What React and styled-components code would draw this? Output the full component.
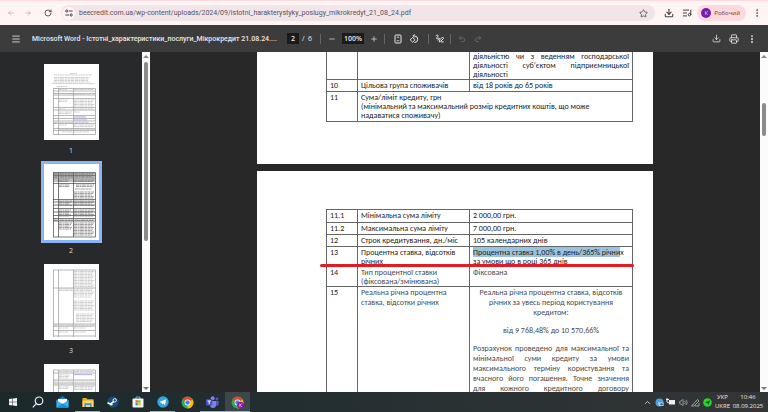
import React from "react";
import styled, { createGlobalStyle } from "styled-components";
import {
  ArrowLeft, ArrowRight, RotateCw, Star, Download, ListMusic, EllipsisVertical,
  Menu, Minus, Plus, Undo2, Redo2, Printer, ChevronUp, Volume2,
} from "lucide-react";

const Global = createGlobalStyle`
  * { box-sizing: border-box; }
  body { margin: 0; font-family: "Open Sans", "Noto Sans", sans-serif; background: #282828; }
  button, input { font: inherit; color: inherit; border: 0; padding: 0; margin: 0; background: none; }
`;

const Window = styled.div`
  display: flex;
  flex-direction: column;
  height: 100vh;
  overflow: hidden;
`;

/* ---------- browser bar ---------- */
const BrowserBar = styled.header`
  flex: none;
  display: flex;
  align-items: center;
  height: 25px;
  padding: 0 2px 0 5px;
  background: #fff5f5;
  border-top: 1px solid #ffd9e0;
  color: #4a4044;
`;

const IconButton = styled.button`
  flex: none;
  display: flex;
  align-items: center;
  justify-content: center;
  width: ${(p) => p.$w || 18}px;
  height: 16px;
  color: ${(p) => p.$color || "inherit"};
`;

const AddressBox = styled.div`
  flex: 1;
  display: flex;
  align-items: center;
  height: 16px;
  margin: 0 5px 0 4px;
  padding: 0 3px 0 0;
  border-radius: 8px;
  background: #f2e5ea;
`;

const SiteInfo = styled.button`
  display: flex;
  align-items: center;
  justify-content: center;
  width: 13px;
  height: 13px;
  margin: 0 4px 0 1px;
  border-radius: 50%;
  background: #fff5f5;
`;

const Address = styled.input`
  flex: 1;
  min-width: 0;
  font-family: Roboto, sans-serif;
  font-size: 7px;
  line-height: 12px;
  color: #5b5156;
  outline: none;
`;

const Profile = styled.button`
  display: flex;
  align-items: center;
  gap: 3px;
  height: 16px;
  margin: 0 2px 0 1px;
  padding: 0 6px 0 4px;
  border-radius: 8px;
  background: #ffd9e0;
  color: #5c3a44;
  font-size: 6px;
`;

const Avatar = styled.span`
  width: 10px;
  height: 10px;
  border-radius: 50%;
  background: #7320a8;
  color: #e8d5f2;
  font-size: 6px;
  line-height: 10px;
  text-align: center;
`;

/* ---------- PDF toolbar ---------- */
const PdfBar = styled.div`
  flex: none;
  display: flex;
  align-items: center;
  height: 27px;
  padding: 0 7px;
  background: #3c3c3c;
  color: #e8e8e8;
  font-size: 8px;
`;

const DocTitle = styled.h1`
  min-width: 241px;
  margin: 0 10px 0 7px;
  font-family: Roboto, sans-serif;
  font-size: 7px;
  line-height: 12px;
  font-weight: 500;
  white-space: nowrap;
`;

const PageBox = styled.input`
  width: ${(p) => p.$w}px;
  height: 11px;
  background: #1b1b1b;
  text-align: center;
  font-size: 7px;
  font-weight: 600;
`;

const PageTotal = styled.span`
  margin-left: 3px;
  font-size: 7px;
`;

const Divider = styled.span`
  width: 1px;
  height: 10px;
  margin: 0 ${(p) => p.$right}px 0 ${(p) => p.$left}px;
  background: #666;
`;

const Spacer = styled.span`
  flex: 1;
`;

/* ---------- body ---------- */
const Body = styled.div`
  flex: 1;
  min-height: 0;
  display: flex;
`;

const Sidebar = styled.nav`
  flex: none;
  display: flex;
  flex-direction: column;
  align-items: center;
  width: 142px;
  padding-top: 9px;
  overflow: hidden;
  background: #28292a;
`;

const ThumbLink = styled.a`
  flex: none;
  display: flex;
  flex-direction: column;
  align-items: center;
  height: 100px;
  color: #dcdcdc;
  font-size: 7px;
  line-height: 9px;
  text-decoration: none;
`;

const ThumbFrame = styled.span`
  display: block;
  height: 82px;
  margin-bottom: 3px;
  border: 3px solid ${(p) => (p.$active ? "#8ab4f8" : "transparent")};

  svg { display: block; }
`;

const ScrollTrack = styled.div`
  flex: none;
  display: flex;
  flex-direction: column;
  align-items: center;
  width: 8px;
  padding: 3px 0 2px;
  background: #fbfbfb;
`;

const Arrow = styled.span`
  flex: none;
  border: 3px solid transparent;
  border-top-width: ${(p) => (p.$down ? 3 : 0)}px;
  border-bottom-width: ${(p) => (p.$down ? 0 : 3)}px;
  border-top-color: ${(p) => (p.$down ? "#777" : "transparent")};
  border-bottom-color: ${(p) => (p.$down ? "transparent" : "#888")};
`;

const Thumb = styled.span`
  flex: none;
  width: 4px;
  height: ${(p) => p.$h}px;
  margin: ${(p) => p.$gap}px 0 auto;
  border-radius: 2px;
  background: #8b8b8b;
`;

const Viewer = styled.main`
  flex: 1;
  min-width: 0;
  display: flex;
  flex-direction: column;
  align-items: center;
  overflow: hidden;
  background: #282828;
`;

const Sheet = styled.section`
  flex: none;
  width: 396px;
  max-width: 100%;
  padding: ${(p) => p.$top}px 20px ${(p) => p.$bottom}px 69px;
  margin-top: ${(p) => (p.$scrolled ? -2 : 0)}px;
  margin-bottom: 7px;
  background: #fff;
`;

const Grid = styled.table`
  width: 100%;
  border-collapse: collapse;
  table-layout: fixed;
  font-family: Carlito, Lato, "Open Sans", sans-serif;
  font-size: 8px;
  line-height: 10px;
  color: #222;
`;

const Row = styled.tr`
  height: ${(p) => p.$h || 12}px;
  line-height: ${(p) => (p.$tight ? 9 : 10)}px;

  > td { padding: ${(p) => (p.$tight ? "1px 3px 0" : "0 3px")}; }
`;

const Cell = styled.td`
  border: 1px solid #666;
  vertical-align: top;
  color: ${(p) => (p.$soft ? "#4a4a4a" : "inherit")};
`;

const Para = styled.p`
  margin: 0 0 ${(p) => p.$after || 0}px;
  text-align: ${(p) => p.$align || "left"};
  text-align-last: ${(p) => (p.$stretch ? "justify" : "auto")};
  white-space: ${(p) => (p.$stretch ? "nowrap" : "normal")};
`;

const Marked = styled.mark`
  background: #9cc3dd;
  color: inherit;
`;

const RateCell = styled(Cell)`
  position: relative;
`;

const RedLine = styled.span`
  position: absolute;
  left: -7px;
  bottom: -1px;
  z-index: 1;
  width: 314px;
  height: 3px;
  border-radius: 2px;
  background: #e31b23;
`;

/* ---------- taskbar ---------- */
const Taskbar = styled.footer`
  flex: none;
  display: flex;
  align-items: stretch;
  height: 20px;
  background: linear-gradient(90deg, #1b292b, #263032 50%, #343536);
  color: #e6e6e6;
`;

const Task = styled.button`
  display: flex;
  align-items: center;
  justify-content: center;
  width: 25px;
  background: ${(p) => (p.$active ? "#3d4649" : "none")};
  box-shadow: inset 0 ${(p) => (p.$open ? -1 : 0)}px 0 #86b3cf;
`;

const Tray = styled.div`
  display: flex;
  align-items: center;
  margin-left: auto;
  padding-right: 4px;
`;

const TrayButton = styled.button`
  display: flex;
  align-items: center;
  justify-content: center;
  width: 12px;
`;

const TrayText = styled.div`
  width: ${(p) => p.$w}px;
  font-size: 6px;
  line-height: 9px;
  text-align: center;
`;

/* ---------- drawings ---------- */
const Tune = () => (
  <svg width="8" height="8" viewBox="0 0 8 8" fill="none" stroke="#4a4044">
    <circle cx="1.8" cy="2" r="1.1" /><path d="M4 2h3.6M.4 6H4" /><circle cx="6.2" cy="6" r="1.1" />
  </svg>
);
const FitPage = () => (
  <svg width="8" height="10" viewBox="0 0 8 10" fill="none" stroke="currentColor">
    <rect x="1" y="1" width="6" height="8" rx=".8" /><path d="M2.8 4L4 2.7 5.2 4M2.8 6L4 7.3 5.2 6" strokeWidth=".8" />
  </svg>
);
const Rotate = () => (
  <svg width="10" height="10" viewBox="0 0 10 10" fill="none" stroke="currentColor">
    <path d="M4.4 1.9h1a3.3 3.3 0 1 1 0 6.6M5.6.3L4 1.9l1.6 1.6M3.6 3.4L6 5.8 3.6 8.2 1.2 5.8z" />
  </svg>
);
const Annotate = () => (
  <svg width="9" height="9" viewBox="0 0 9 9" fill="none" stroke="currentColor">
    <path d="M.8 2.2C2 .4 3.4.8 3 2.1S1 3.9 1.6 4.5 4 3.5 4.4 4.3 3 5.6 2.4 6.2M4.2 7.9l.3-1.9 3-3 1.2 1.3-3 3zM6 7.9h2.6" />
  </svg>
);

function PageThumb({ rows, text, links = [], dark, cut = 73 }) {
  const line = dark ? "#444" : "#999";
  const top = rows[0];
  return (
    <svg width="55" height="76" viewBox="0 0 55 76">
      <rect width="55" height="76" fill="#fff" />
      <g stroke={line} strokeWidth=".7">
        {rows.map((y) => <path key={y} d={`M9 ${y}H51.5`} />)}
        <path d={`M9.5 ${top}V${cut}M14.5 ${top}V${cut}M29.5 ${top}V${cut}M51.5 ${top}V${cut}`} />
      </g>
      <g stroke={dark ? "#777" : "#bbb"} strokeWidth=".7" strokeDasharray="3 .5 2 .4 4 .6">
        {text.flatMap(([x, y, w, n]) =>
          Array.from({ length: n }, (_, i) => (
            <path key={`${x}-${y}-${i}`} d={`M${x} ${y + i * 1.5}h${w - (i % 3)}`} />
          ))
        )}
      </g>
      {links.map(([x, y, w]) => <path key={y} d={`M${x} ${y}h${w}`} stroke="#b4b4f2" strokeWidth="1.2" />)}
    </svg>
  );
}

const thumbs = [
  { label: "1", rows: [24.5, 27, 29.5, 31, 34.5, 43.5, 46, 51.5, 54.5, 57, 59.5, 64.5, 66.5, 70.5], cut: 70.5,
    text: [[26, 9.5, 7, 1], [10, 11, 38, 1], [10, 13.5, 36, 4], [8, 19.5, 43, 1], [13, 22.5, 10, 1], [15, 25.5, 8, 1], [30, 25.5, 19, 1], [24, 30, 17, 1], [15, 36, 9, 2], [30, 36, 20, 5], [15, 45, 6, 1], [30, 45, 19, 1], [15, 48, 13, 2], [30, 48, 6, 1], [10, 58.5, 35, 1], [15, 61, 8, 1], [30, 61, 20, 2], [15, 65.5, 36, 1], [18, 68, 27, 1]],
    links: [[30, 53, 12], [30, 56, 13]] },
  { label: "2", dark: true, rows: [8.5, 10, 11.5, 13, 15, 17, 19.5, 35.5, 38, 41, 44.5, 48, 51.5, 54.5, 57, 73],
    text: [[10, 9.3, 40, 4], [15, 16, 10, 2], [30, 16, 20, 2], [15, 21, 11, 2], [32, 21, 18, 2], [31, 25, 17, 1], [30, 28, 20, 5], [15, 37, 13, 4], [30, 37, 20, 4], [15, 46, 12, 5], [30, 46, 20, 5], [10, 55, 40, 2], [15, 59, 13, 5], [30, 59, 20, 9]] },
  { label: "3", rows: [6, 24, 60, 62, 66.5, 72],
    text: [[30, 7.5, 20, 11], [15, 25, 34, 2], [30, 28, 20, 3], [30, 33, 17, 1], [30, 37, 20, 7], [32, 50, 18, 6], [10, 61, 40, 2], [15, 64, 9, 1], [30, 64, 12, 1], [15, 68, 9, 1], [30, 68, 12, 1]] },
  { rows: [6, 9, 16, 19, 21], text: [[15, 7.5, 35, 1], [15, 11, 11, 3], [10, 17, 40, 1], [10, 20, 40, 1], [15, 23, 10, 2], [30, 22.5, 20, 3]], links: [[30, 10.5, 18]] },
];

const ChromeLogo = ({ badge }) => (
  <svg width="13" height="13" viewBox="0 0 24 24">
    <circle cx="12" cy="12" r="11" fill="#33a852" />
    <path d="M12 12L2.5 6.5A11 11 0 0 1 21.5 6.5z" fill="#ea4335" />
    <path d="M12 12l9.5-5.5A11 11 0 0 1 12 23z" fill="#fbbc04" />
    <circle cx="12" cy="12" r="5.4" fill="#fff" /><circle cx="12" cy="12" r="4.2" fill="#4285f4" />
    {badge && <circle cx="17.5" cy="17" r="6.3" fill="#8a1aa8" />}
    {badge && <path d="M16 14v6M20 14l-3.5 3 3.5 3" stroke="#fff" fill="none" />}
  </svg>
);

const tasks = [
  { name: "Start", icon: <svg width="8" height="8" viewBox="0 0 8 8" fill="#f4f4f4"><path d="M0 1l3.5-.5v3.2H0zM4 .4L8 0v3.7H4zM0 4.2h3.5v3.3L0 7zM4 4.2h4V8l-4-.5z" /></svg> },
  { name: "Search", icon: <svg width="12" height="12" viewBox="0 0 12 12" fill="none" stroke="#eee" strokeWidth="1.2"><circle cx="7" cy="4.8" r="3.8" /><path d="M4.3 7.6L.8 11.3" /></svg> },
  { name: "Mail", icon: <svg width="13" height="12" viewBox="0 0 13 12"><path d="M.5 4L6.5 0l6 4v7.5H.5z" fill="#1173c4" /><path d="M2 3h9v5H2z" fill="#fff" /><path d="M.5 4l6 4 6-4v7.5H.5z" fill="#35b4ef" /><path d="M.5 11.5l6-4 6 4z" fill="#1b8fdc" /></svg> },
  { name: "Files", open: true, icon: <svg width="12" height="11" viewBox="0 0 12 11"><path d="M.5 1h4l1 1.2h6V10H.5z" fill="#e8a92c" /><path d="M.5 3.5h11V10H.5z" fill="#fcd567" /><path d="M2.5 10V6.3h7V10H8V8H4v2z" fill="#3c8ed0" /></svg> },
  { name: "Steam", icon: <svg width="12" height="12" viewBox="0 0 12 12"><circle cx="6" cy="6" r="5.7" fill="#174a7c" /><path d="M.5 6.8l3 1.3L7 5.2" stroke="#fff" strokeWidth="1.7" fill="none" /><circle cx="7.7" cy="4.3" r="1.7" fill="#174a7c" stroke="#fff" strokeWidth=".9" /><circle cx="4.3" cy="8.3" r="1.3" fill="#fff" /></svg> },
  { name: "Store", icon: <svg width="12" height="12" viewBox="0 0 12 12"><path d="M4 3V1h4v2" fill="none" stroke="#57b7e8" /><rect x=".5" y="2.5" width="11" height="9" rx="1" fill="#f5f5f5" /><path d="M3.5 4.3h2.3v2.3H3.5z" fill="#f25022" /><path d="M6.2 4.3h2.3v2.3H6.2z" fill="#7fba00" /><path d="M3.5 7h2.3v2.3H3.5z" fill="#00a4ef" /><path d="M6.2 7h2.3v2.3H6.2z" fill="#ffb900" /></svg> },
  { name: "Telegram", open: true, icon: <svg width="12" height="12" viewBox="0 0 12 12"><circle cx="6" cy="6" r="5.7" fill="#34a5df" /><path d="M2.3 5.9L9.2 3.2 8 9 6.1 7.6 5 8.6 4.7 6.9z" fill="#fff" /></svg> },
  { name: "Chrome", icon: <ChromeLogo /> },
  { name: "Teams", open: true, icon: <svg width="13" height="12" viewBox="0 0 13 12"><circle cx="6.7" cy="2.3" r="2" fill="#7b83eb" /><circle cx="11" cy="3" r="1.4" fill="#5059c9" /><path d="M4 5h6v4a3 3 0 0 1-6 0z" fill="#7b83eb" /><path d="M10 5h2.7v3A2 2 0 0 1 10 9.5z" fill="#5059c9" /><rect y="3.2" width="6.3" height="6.3" rx=".7" fill="#4b53bc" /><path d="M1.5 5h3.4M3.2 5v3.2" stroke="#fff" /></svg> },
  { name: "Chrome, work profile", open: true, active: true, icon: <ChromeLogo badge /> },
];

export default function App() {
  return (
    <Window>
      <Global />
      <BrowserBar>
        <IconButton $w={12} $color="#b3a8aa" aria-label="Back"><ArrowLeft size={8} /></IconButton>
        <IconButton $w={22} $color="#b3a8aa" aria-label="Forward"><ArrowRight size={8} /></IconButton>
        <IconButton $w={18} aria-label="Reload"><RotateCw size={8} strokeWidth={2.6} /></IconButton>
        <AddressBox>
          <SiteInfo aria-label="Site information"><Tune /></SiteInfo>
          <Address aria-label="Address" defaultValue="beecredit.com.ua/wp-content/uploads/2024/09/istotni_harakterystyky_poslugy_mikrokredyt_21_08_24.pdf" />
          <IconButton aria-label="Bookmark"><Star size={9} /></IconButton>
        </AddressBox>
        <IconButton aria-label="Downloads"><Download size={10} strokeWidth={2.6} /></IconButton>
        <IconButton aria-label="Media"><ListMusic size={10} strokeWidth={2.4} /></IconButton>
        <Profile><Avatar>К</Avatar>Робочий</Profile>
        <IconButton aria-label="Browser menu"><EllipsisVertical size={10} /></IconButton>
      </BrowserBar>

      <PdfBar>
        <IconButton aria-label="Menu"><Menu size={10} /></IconButton>
        <DocTitle>Microsoft Word - Істотні_характеристики_послуги_Мікрокредит 21.08.24....</DocTitle>
        <PageBox $w={12} aria-label="Page" defaultValue="2" />
        <PageTotal>/&nbsp; 6</PageTotal>
        <Divider $left={8} $right={1} />
        <IconButton $w={20} aria-label="Zoom out"><Minus size={8} /></IconButton>
        <PageBox $w={22} aria-label="Zoom" defaultValue="100%" />
        <IconButton $w={20} aria-label="Zoom in"><Plus size={8} /></IconButton>
        <Divider $left={0} $right={4} />
        <IconButton aria-label="Fit to page"><FitPage /></IconButton>
        <IconButton $w={14} aria-label="Rotate"><Rotate /></IconButton>
        <Divider $left={7} $right={4} />
        <IconButton $w={12} aria-label="Annotate"><Annotate /></IconButton>
        <Divider $left={5} $right={3} />
        <IconButton $w={16} $color="#777" aria-label="Undo"><Undo2 size={8} /></IconButton>
        <IconButton $w={16} $color="#777" aria-label="Redo"><Redo2 size={8} /></IconButton>
        <Spacer />
        <IconButton aria-label="Download"><Download size={9} /></IconButton>
        <IconButton aria-label="Print"><Printer size={10} /></IconButton>
        <IconButton aria-label="More"><EllipsisVertical size={10} strokeWidth={2.6} /></IconButton>
      </PdfBar>

      <Body>
        <Sidebar aria-label="Pages">
          {thumbs.map(({ label, ...drawing }, i) => (
            <ThumbLink key={i} href={`#page-${i + 1}`}>
              <ThumbFrame $active={i === 1}><PageThumb {...drawing} /></ThumbFrame>
              {label}
            </ThumbLink>
          ))}
        </Sidebar>
        <ScrollTrack><Arrow /><Thumb $h={179} $gap={4} /><Arrow $down /></ScrollTrack>

        <Viewer>
          <Sheet $top={0} $bottom={42} $scrolled>
            <Grid>
              <colgroup><col width="31" /><col width="112" /><col /></colgroup>
              <tbody>
                <Row $tight $h={29}>
                  <Cell /><Cell />
                  <Cell>
                    <Para $stretch>діяльністю чи з веденням господарської</Para>
                    <Para $stretch>діяльності суб’єктом підприємницької</Para>
                    <Para>діяльності</Para>
                  </Cell>
                </Row>
                <Row><Cell>10</Cell><Cell>Цільова група споживачів</Cell><Cell>від 18 років до 65 років</Cell></Row>
                <Row $tight $h={30}>
                  <Cell>11</Cell>
                  <Cell colSpan={2}>
                    Сума/ліміт кредиту, грн<br />(мінімальний та максимальний розмір кредитних коштів, що може<br />надаватися споживачу)
                  </Cell>
                </Row>
              </tbody>
            </Grid>
          </Sheet>

          <Sheet id="page-2" $top={38} $bottom={40}>
            <Grid>
              <colgroup><col width="31" /><col width="112" /><col /></colgroup>
              <tbody>
                <Row $h={13}><Cell>11.1</Cell><Cell>Мінімальна сума ліміту</Cell><Cell>2 000,00 грн.</Cell></Row>
                <Row><Cell>11.2</Cell><Cell>Максимальна сума ліміту</Cell><Cell>7 000,00 грн.</Cell></Row>
                <Row><Cell>12</Cell><Cell>Строк кредитування, дн./міс</Cell><Cell>105 календарних днів</Cell></Row>
                <Row $tight $h={20}>
                  <RateCell>13<RedLine /></RateCell>
                  <Cell>Процентна ставка, відсотків<br />річних</Cell>
                  <Cell><Marked>Процентна ставка 1,00% в день/365% річни</Marked>х<br />за умови що в році 365 днів</Cell>
                </Row>
                <Row $tight $h={20}>
                  <Cell>14</Cell>
                  <Cell $soft>Тип процентної ставки<br />(фіксована/змінювана)</Cell>
                  <Cell $soft>Фіксована</Cell>
                </Row>
                <Row>
                  <Cell>15</Cell>
                  <Cell $soft>Реальна річна процентна<br />ставка, відсотки річних</Cell>
                  <Cell $soft>
                    <Para $align="center" $after={8}>Реальна річна процентна ставка, відсотків<br />річних за увесь період користування<br />кредитом:</Para>
                    <Para $align="center" $after={8}>від 9 768,48% до 10 570,66%</Para>
                    <Para $stretch>Розрахунок проведено для максимальної та</Para>
                    <Para $stretch>мінімальної суми кредиту за умови</Para>
                    <Para $stretch>максимального терміну користування та</Para>
                    <Para $stretch>вчасного його погашення. Точне значення</Para>
                    <Para $stretch>для кожного кредитного договору</Para>
                  </Cell>
                </Row>
              </tbody>
            </Grid>
          </Sheet>
        </Viewer>
        <ScrollTrack><Arrow /><Thumb $h={33} $gap={45} /><Arrow $down /></ScrollTrack>
      </Body>

      <Taskbar>
        {tasks.map((t) => (
          <Task key={t.name} aria-label={t.name} $open={t.open} $active={t.active}>{t.icon}</Task>
        ))}
        <Tray>
          <TrayButton aria-label="Hidden icons"><ChevronUp size={9} /></TrayButton>
          <TrayButton aria-label="Sync"><svg width="9" height="9" viewBox="0 0 9 9"><circle cx="4.5" cy="4.5" r="4" fill="#4a9fe0" /><path d="M3 4.5h5.5V8H4z" fill="#c9d6e0" /><circle cx="6.5" cy="6.3" r="1.3" fill="#3673b0" /></svg></TrayButton>
          <TrayButton aria-label="Battery"><svg width="10" height="8" viewBox="0 0 10 8"><path d="M3 2h6v4.5H3z" fill="#eee" /><path d="M0 1.5h3M1 0v4l2 1" stroke="#eee" fill="none" /></svg></TrayButton>
          <TrayButton aria-label="Volume"><Volume2 size={9} strokeWidth={1.5} /></TrayButton>
          <TrayButton aria-label="Pen"><svg width="9" height="9" viewBox="0 0 9 9" fill="none" stroke="#bbb" strokeWidth=".8"><path d="M.5 8L6.5 1.5 8 3 3 8zM4 8h4V5" /></svg></TrayButton>
          <TrayButton aria-label="Protection"><svg width="9" height="9" viewBox="0 0 9 9"><circle cx="4.5" cy="4.5" r="4.3" fill="#27d627" /><path d="M2 4.5L7 2.3 5.5 7 4.5 5z" fill="#124d12" /></svg></TrayButton>
          <TrayText $w={19}>УКР<br />UKRE</TrayText>
          <TrayText $w={32}>10:46<br />08.09.2025</TrayText>
        </Tray>
      </Taskbar>
    </Window>
  );
}
